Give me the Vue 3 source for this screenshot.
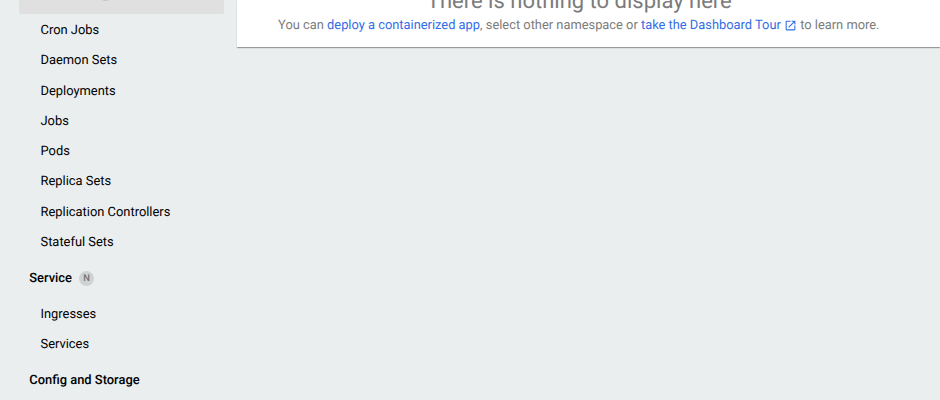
<script setup>
const workloads = ['Cron Jobs', 'Daemon Sets', 'Deployments', 'Jobs', 'Pods', 'Replica Sets', 'Replication Controllers', 'Stateful Sets']
const services = ['Ingresses', 'Services']
</script>

<template>
  <div class="page">
    <nav class="sidebar">
      <div class="active"><span class="badge active-badge"></span></div>
      <a v-for="w in workloads" :key="w" class="item">{{ w }}</a>
      <div class="group">Service<span class="badge">N</span></div>
      <a v-for="s in services" :key="s" class="item">{{ s }}</a>
      <div class="group">Config and Storage</div>
    </nav>
    <main class="content">
      <section class="card">
        <h1>There is nothing to display here</h1>
        <p>You can <a>deploy a containerized app</a>, select other namespace or <a>take the Dashboard Tour <svg viewBox="0 0 24 24"><path fill="currentColor" d="M19 19H5V5h7V3H5a2 2 0 0 0-2 2v14a2 2 0 0 0 2 2h14c1.1 0 2-.9 2-2v-7h-2v7zM14 3v2h3.59l-9.83 9.83 1.41 1.41L19 6.41V10h2V3h-7z" /></svg></a> to learn more.</p>
      </section>
    </main>
  </div>
</template>

<style>
body { margin: 0; overflow: hidden; }
</style>
<style scoped>
.page { display: flex; width: 940px; height: 400px; overflow: hidden; background: #eaeeef; font-family: Roboto, sans-serif; color: #000; text-rendering: geometricPrecision; }
.sidebar { width: 237px; flex: none; }
.active { display: flex; align-items: flex-end; box-sizing: border-box; height: 14px; margin: 0 13px 2px 18.5px; padding: 0 0 13px 79px; border-radius: 0 0 2px 2px; overflow: hidden; background: #e0e0e0; }
.item { display: block; height: 30.3px; padding-left: 40.5px; font-size: 12.9px; line-height: 30.3px; }
.group { display: flex; align-items: center; box-sizing: border-box; height: 41.4px; padding: 0 0 1.4px 29.3px; font-size: 12.9px; font-weight: 500; }
.badge { flex: none; width: 15px; height: 15px; margin-left: 7px; border-radius: 50%; background: #cfd2d2; color: #707374; font-size: 9.4px; line-height: 15px; text-align: center; }
.active-badge { margin-left: 0; background: #c6c6c6; }
.content { flex: 1; min-width: 0; }
.card { display: flex; flex-direction: column; box-sizing: border-box; height: 47px; padding-right: 19.4px; background: #fff; box-shadow: 0 1px 1px rgba(0, 0, 0, .28), 0 2px 1px -1px rgba(0, 0, 0, .1); text-align: center; color: #7b7b7b; }
h1 { margin: -11.4px 0 0 1px; font-size: 22px; line-height: 26px; font-weight: 400; }
p { margin: 0; font-size: 12.87px; line-height: 22.6px; white-space: nowrap; }
p a { color: #326de6; }
svg { width: 13px; height: 13px; vertical-align: -3px; }
</style>
